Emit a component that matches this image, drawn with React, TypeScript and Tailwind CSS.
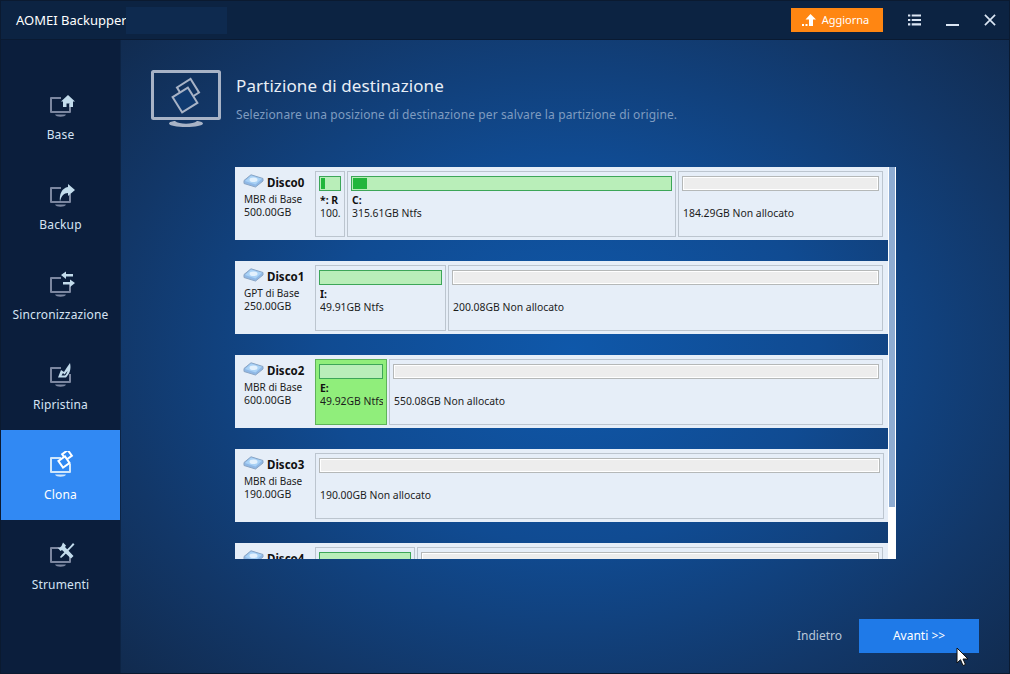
import type { ReactNode } from 'react';

type Part = {
  width: number;
  label?: string;
  text: string;
  bar: 'used' | 'free';
  fill?: number;
  selected?: boolean;
};

type Disk = {
  name: string;
  kind: string;
  size: string;
  parts: Part[];
};

const disks: Disk[] = [
  {
    name: 'Disco0',
    kind: 'MBR di Base',
    size: '500.00GB',
    parts: [
      { width: 30, label: '*: R', text: '100.', bar: 'used', fill: 4 },
      { width: 329, label: 'C:', text: '315.61GB Ntfs', bar: 'used', fill: 14 },
      { width: 205, text: '184.29GB Non allocato', bar: 'free' },
    ],
  },
  {
    name: 'Disco1',
    kind: 'GPT di Base',
    size: '250.00GB',
    parts: [
      { width: 131, label: 'I:', text: '49.91GB Ntfs', bar: 'used' },
      { width: 435, text: '200.08GB Non allocato', bar: 'free' },
    ],
  },
  {
    name: 'Disco2',
    kind: 'MBR di Base',
    size: '600.00GB',
    parts: [
      { width: 72, label: 'E:', text: '49.92GB Ntfs', bar: 'used', selected: true },
      { width: 494, text: '550.08GB Non allocato', bar: 'free' },
    ],
  },
  {
    name: 'Disco3',
    kind: 'MBR di Base',
    size: '190.00GB',
    parts: [{ width: 569, text: '190.00GB Non allocato', bar: 'free' }],
  },
  {
    name: 'Disco4',
    kind: 'MBR di Base',
    size: '320.00GB',
    parts: [
      { width: 100, label: 'F:', text: '49.90GB Ntfs', bar: 'used' },
      { width: 466, text: '270.10GB Non allocato', bar: 'free' },
    ],
  },
];

function Monitor({ color, children }: { color: string; children: ReactNode }) {
  return (
    <svg width="30" height="28" viewBox="0 0 30 28" fill="none">
      <path d="M15 7H5v14h19v-8" stroke={color} strokeWidth="2" strokeLinejoin="round" />
      <path d="M9 23.500h11c-1 3-10 3-11 0z" fill={color} />
      {children}
    </svg>
  );
}

const glyph = '#c3dcec';

const navItems: { label: string; icon: ReactNode }[] = [
  {
    label: 'Base',
    icon: <path d="M22 4 15 10.500h2V16h3.500v-3.500h3V16H27v-5.500h2z" fill={glyph} />,
  },
  {
    label: 'Backup',
    icon: <path d="M22 3 29 9l-7 6v-3c-4 0-7 3-8 9-1-8 2-14 8-15z" fill={glyph} />,
  },
  {
    label: 'Sincronizzazione',
    icon: <path d="M15 4l5-3.500V3h7v2.500h-7V8zM29 12l-5-3.500V11h-7v2.500h7V16z" fill={glyph} />,
  },
  {
    label: 'Ripristina',
    icon: (
      <path
        d="M24 2c1.500 6-.5 11-4 14.500h-8l3-7.500 3 2 2.500-4zM15.500 14.500H19c1-1 2-2.500 2.500-4.500l-3 3.500-1.500-1.500z"
        fill={glyph}
        fillRule="evenodd"
      />
    ),
  },
  {
    label: 'Clona',
    icon: (
      <g stroke="#ffffff" strokeWidth="2" fill="#3189f3">
        <rect x="17.500" y="0.500" width="7" height="7" transform="rotate(-35 21 4)" />
        <rect x="14" y="7" width="8" height="8" transform="rotate(-35 18 11)" />
      </g>
    ),
  },
  {
    label: 'Strumenti',
    icon: (
      <g fill={glyph}>
        <path d="M17 1.500l3 3-1 1.500 8.500 9-2.500 2.500-9-8.500-1.500 1-3-3.500 2 .5 2-2z" />
        <path d="M27 2l1.500 1.500-3 3-8 8.500-2.500 2-1-1 2-2.500 8.500-8.500z" />
      </g>
    ),
  },
];

function DiskIcon() {
  return (
    <svg width="21" height="14" viewBox="0 0 21 14">
      <path d="M8 .8 20 4.500v2.500L12.500 13 1 9.500V6.500z" fill="#8fb8e6" stroke="#8aa5c4" strokeWidth="1" />
      <path d="M8 1.600 19 4.800 12.500 10.500 2 7z" fill="#a9d2f6" />
      <ellipse cx="10.500" cy="5.800" rx="4" ry="2.300" fill="#e3f1fd" />
    </svg>
  );
}

function PartitionBox({ part }: { part: Part }) {
  const isUsed = part.bar === 'used';
  return (
    <div
      style={{ width: part.width }}
      className={`shrink-0 h-full overflow-hidden border pt-1 pl-[3px] pr-[3px] ${
        part.selected ? 'bg-[#90ee7b] border-[#5fb35a]' : 'bg-[#e6eef8] border-[#bcc5cf]'
      }`}
    >
      <div
        className={`h-[15px] border p-[1px] ${
          isUsed ? 'bg-[#b9eeb9] border-[#3da658]' : 'bg-[#ededed] border-[#b5b8b8] shadow-[inset_0_0_0_1px_#fff]'
        }`}
      >
        {part.fill ? <div style={{ width: part.fill }} className="h-full bg-[#22b63c]" /> : null}
      </div>
      <div className="mt-[2px] ml-[1px] h-[13px] text-[10.400px] leading-[14px] font-bold whitespace-nowrap overflow-hidden text-[#111]">
        {part.label}
      </div>
      <div className="ml-[1px] text-[10.400px] leading-[14px] whitespace-nowrap overflow-hidden text-[#1c1c1c]">
        {part.text}
      </div>
    </div>
  );
}

function DiskRow({ disk }: { disk: Disk }) {
  return (
    <div className="h-[73px] shrink-0 bg-[#e6eef8] flex mb-[21px]">
      <div className="w-20 shrink-0 pl-[8px] pt-[7px] text-[#1c1c1c]">
        <div className="flex items-start gap-[3px]">
          <DiskIcon />
          <span className="pt-[2px] text-[11.500px] font-bold leading-[14px] text-[#111]">{disk.name}</span>
        </div>
        <div className="mt-[3px] pl-[1px] text-[10px] leading-[13px] whitespace-nowrap">{disk.kind}</div>
        <div className="text-[10.500px] leading-[13px] pl-[1px]">{disk.size}</div>
      </div>
      <div className="flex gap-[2px] pt-1 pb-[3px] h-full">
        {disk.parts.map((part) => (
          <PartitionBox key={part.text} part={part} />
        ))}
      </div>
    </div>
  );
}

function NavItem({ label, icon }: { label: string; icon: ReactNode }) {
  const active = label === 'Clona';
  return (
    <div
      className={`h-[90px] flex flex-col pt-[21px] ${
        active ? 'bg-[#3189f3] text-white' : 'text-[#d5e3f3]'
      }`}
    >
      <div className="pl-[45px]">
        <Monitor color={active ? '#cfe6fb' : '#7c87a0'}>{icon}</Monitor>
      </div>
      <span className="mt-[8px] text-center text-[12px] leading-[16px] tracking-[0.15px] whitespace-nowrap">
        {label}
      </span>
    </div>
  );
}

export default function App() {
  return (
    <div
      className="relative w-[1010px] h-[674px] overflow-hidden border border-[#0b1a30] flex flex-col text-white bg-[radial-gradient(ellipse_620px_480px_at_570px_350px,#0f58aa_0%,#104b92_40%,#123768_75%,#112a4d_100%)]"
      style={{ fontFamily: '"Noto Sans", "Liberation Sans", sans-serif' }}
    >
      <header className="h-[39px] shrink-0 flex items-center bg-[#0c2342] border-b border-[#0a1a32]">
        <span className="ml-[15px] w-[109px] text-[13px] leading-none text-white whitespace-nowrap">AOMEI Backupper</span>
        <div className="ml-[1px] w-[101px] h-[27px] bg-[#0e2a4f]" />
        <div className="ml-auto flex items-center">
          <button className="w-[92px] h-6 pr-[3px] bg-[#ff8612] flex items-center justify-center gap-[5px] text-[11px] text-white">
            <svg width="15" height="13" viewBox="0 0 15 13" fill="#fff">
              <path d="M8.500 0 14 5.500h-3V12H7V5.500H3.500zM0 10h2v2H0zM3.500 10h2v2h-2z" />
            </svg>
            Aggiorna
          </button>
          <button className="ml-[25px] w-[13px] h-3 flex items-center text-[#dbe6f4]">
            <svg width="13" height="12" viewBox="0 0 14 12" fill="currentColor">
              <path d="M0 0h2.500v2.300H0zM4 0h10v2.300H4zM0 4.800h2.500v2.300H0zM4 4.800h10v2.300H4zM0 9.600h2.500v2.300H0zM4 9.600h10v2.300H4z" />
            </svg>
          </button>
          <div className="ml-[25px] w-[13px] h-[2px] mt-[9px] bg-[#dbe6f4]" />
          <button className="ml-[25px] mr-[13px] text-[#dbe6f4]">
            <svg width="12" height="12" viewBox="0 0 13 13" stroke="currentColor" strokeWidth="1.800">
              <path d="M1 1l11 11M12 1 1 12" />
            </svg>
          </button>
        </div>
      </header>

      <div className="flex-1 flex min-h-0">
        <nav className="w-[120px] shrink-0 pt-[30px] bg-[#0b1e3c] border-r border-[#0d2444]">
          {navItems.map((item) => (
            <NavItem key={item.label} label={item.label} icon={item.icon} />
          ))}
        </nav>

        <main className="flex-1 min-w-0 flex flex-col pl-[30px] pt-[30px]">
          <div className="flex h-[60px]">
            <svg width="72" height="60" viewBox="0 0 72 60" fill="none" stroke="#a8b3c6">
              <rect x="1.500" y="1.500" width="67" height="47" rx="1" strokeWidth="3" />
              <rect x="29" y="12" width="16" height="16" transform="rotate(-32 37 20)" strokeWidth="2" />
              <rect x="25" y="21" width="18" height="18" transform="rotate(-32 34 30)" strokeWidth="2" fill="#103a70" />
              <path d="M18 53.500c0-1.500 4-2.500 6-2.500 4 3.500 18 3.500 22 0 2 0 6 1 6 2.500 0 2-8 3.500-17 3.500s-17-1.500-17-3.500z" fill="#a8b3c6" stroke="none" />
            </svg>
            <div className="ml-[13px]">
              <h1 className="mt-[3px] text-[17px] leading-[26px] font-normal tracking-[0.1px] text-[#e8eef6] whitespace-nowrap">
                Partizione di destinazione
              </h1>
              <p className="mt-[8px] text-[12px] leading-[16px] tracking-[0.11px] text-[#7f9cc0] whitespace-nowrap">
                Selezionare una posizione di destinazione per salvare la partizione di origine.
              </p>
            </div>
          </div>

          <div className="ml-[84px] mt-[37px] w-[661px] h-[392px] overflow-hidden flex">
            <div className="w-[653px] shrink-0 flex flex-col">
              {disks.map((disk) => (
                <DiskRow key={disk.name} disk={disk} />
              ))}
            </div>
            <div className="w-2 shrink-0 bg-white px-[1px] h-full">
              <div className="h-[340px] bg-[#8eacd2]" />
            </div>
          </div>

          <div className="mt-[60px] ml-[646px] flex items-center h-[34px]">
            <span className="text-[12px] text-[#b9c7d9] whitespace-nowrap">Indietro</span>
            <button className="ml-[17px] w-[120px] h-[34px] bg-[#1f7ae8] text-[12px] text-white whitespace-nowrap">
              Avanti &gt;&gt;
            </button>
          </div>
        </main>
      </div>

      <svg className="absolute left-[955px] top-[646px]" width="14" height="20" viewBox="0 0 14 20">
        <path d="M1 1v15l3.500-3.300L7 18.500l2.500-1-2.500-5.500h5z" fill="#fff" stroke="#111" strokeWidth="1" />
      </svg>
    </div>
  );
}
